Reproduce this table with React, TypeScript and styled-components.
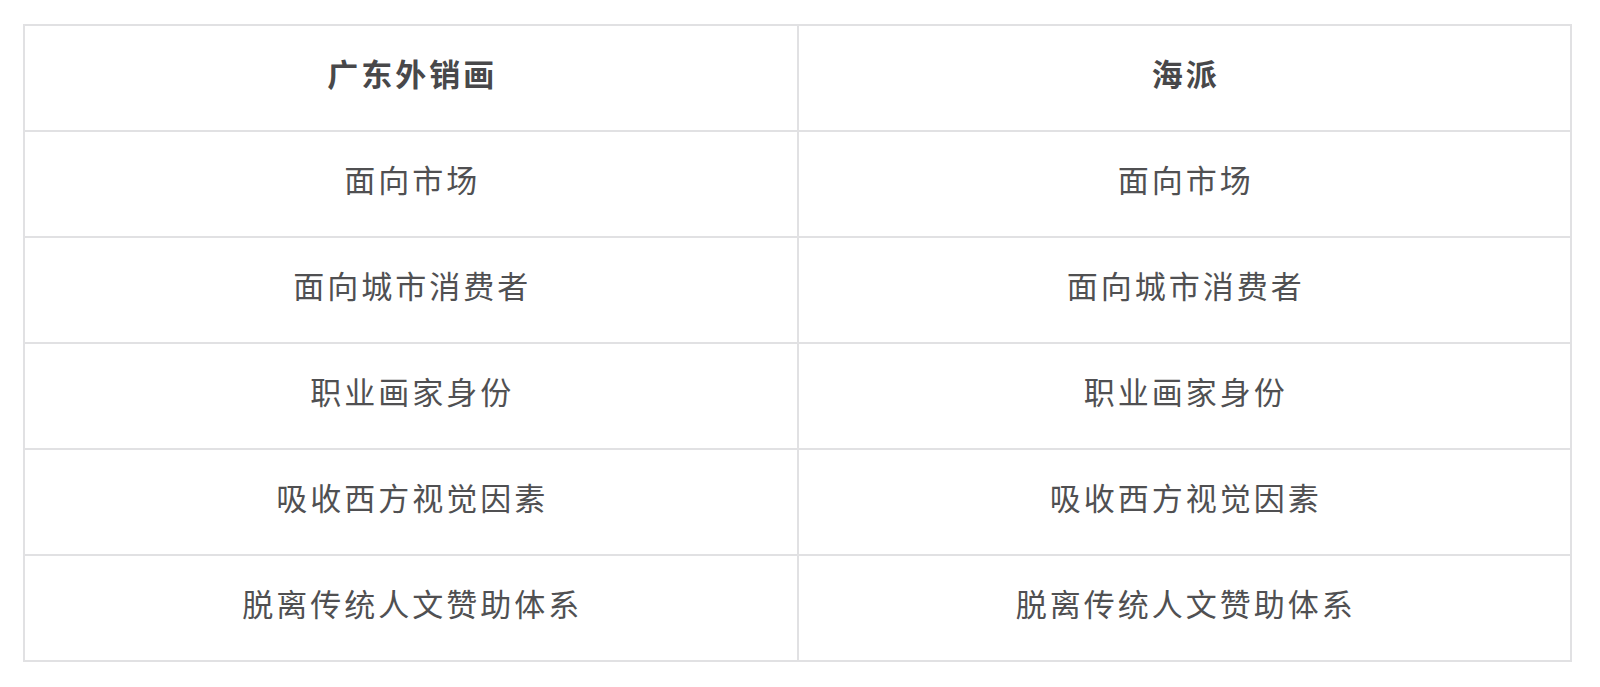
import React from "react";
import styled, { createGlobalStyle } from "styled-components";

const Global = createGlobalStyle`
  html, body { margin: 0; padding: 0; background: #ffffff; }
  body { font-family: "Noto Sans CJK SC", "Noto Sans", sans-serif; }
`;

const Page = styled.div`
  padding: 24px 0 0 23px;
`;

const Grid = styled.div`
  box-sizing: border-box;
  width: 1549px;
  display: grid;
  grid-template-columns: 1fr 1fr;
  border-top: 2px solid #e1e1e3;
  border-left: 2px solid #e1e1e3;
`;

const Cell = styled.div<{ $head?: boolean }>`
  box-sizing: border-box;
  height: 106px;
  border-right: 2px solid #e1e1e3;
  border-bottom: 2px solid #e1e1e3;
  display: flex;
  align-items: center;
  justify-content: center;
  padding-bottom: 12px;
  padding-left: 3px;
  font-family: "Noto Sans CJK SC", "Noto Sans", sans-serif;
  font-size: 31px;
  letter-spacing: 3px;
  font-weight: ${(p) => (p.$head ? 700 : 400)};
  color: ${(p) => (p.$head ? "#48484a" : "#505052")};
`;

const head = ["广东外销画", "海派"];
const rows = [
  ["面向市场", "面向市场"],
  ["面向城市消费者", "面向城市消费者"],
  ["职业画家身份", "职业画家身份"],
  ["吸收西方视觉因素", "吸收西方视觉因素"],
  ["脱离传统人文赞助体系", "脱离传统人文赞助体系"],
];

export default function App() {
  return (
    <>
      <Global />
      <Page>
        <Grid>
          {head.map((h) => (
            <Cell key={h} $head>
              {h}
            </Cell>
          ))}
          {rows.map((r, i) =>
            r.map((c, j) => <Cell key={`${i}-${j}`}>{c}</Cell>)
          )}
        </Grid>
      </Page>
    </>
  );
}
